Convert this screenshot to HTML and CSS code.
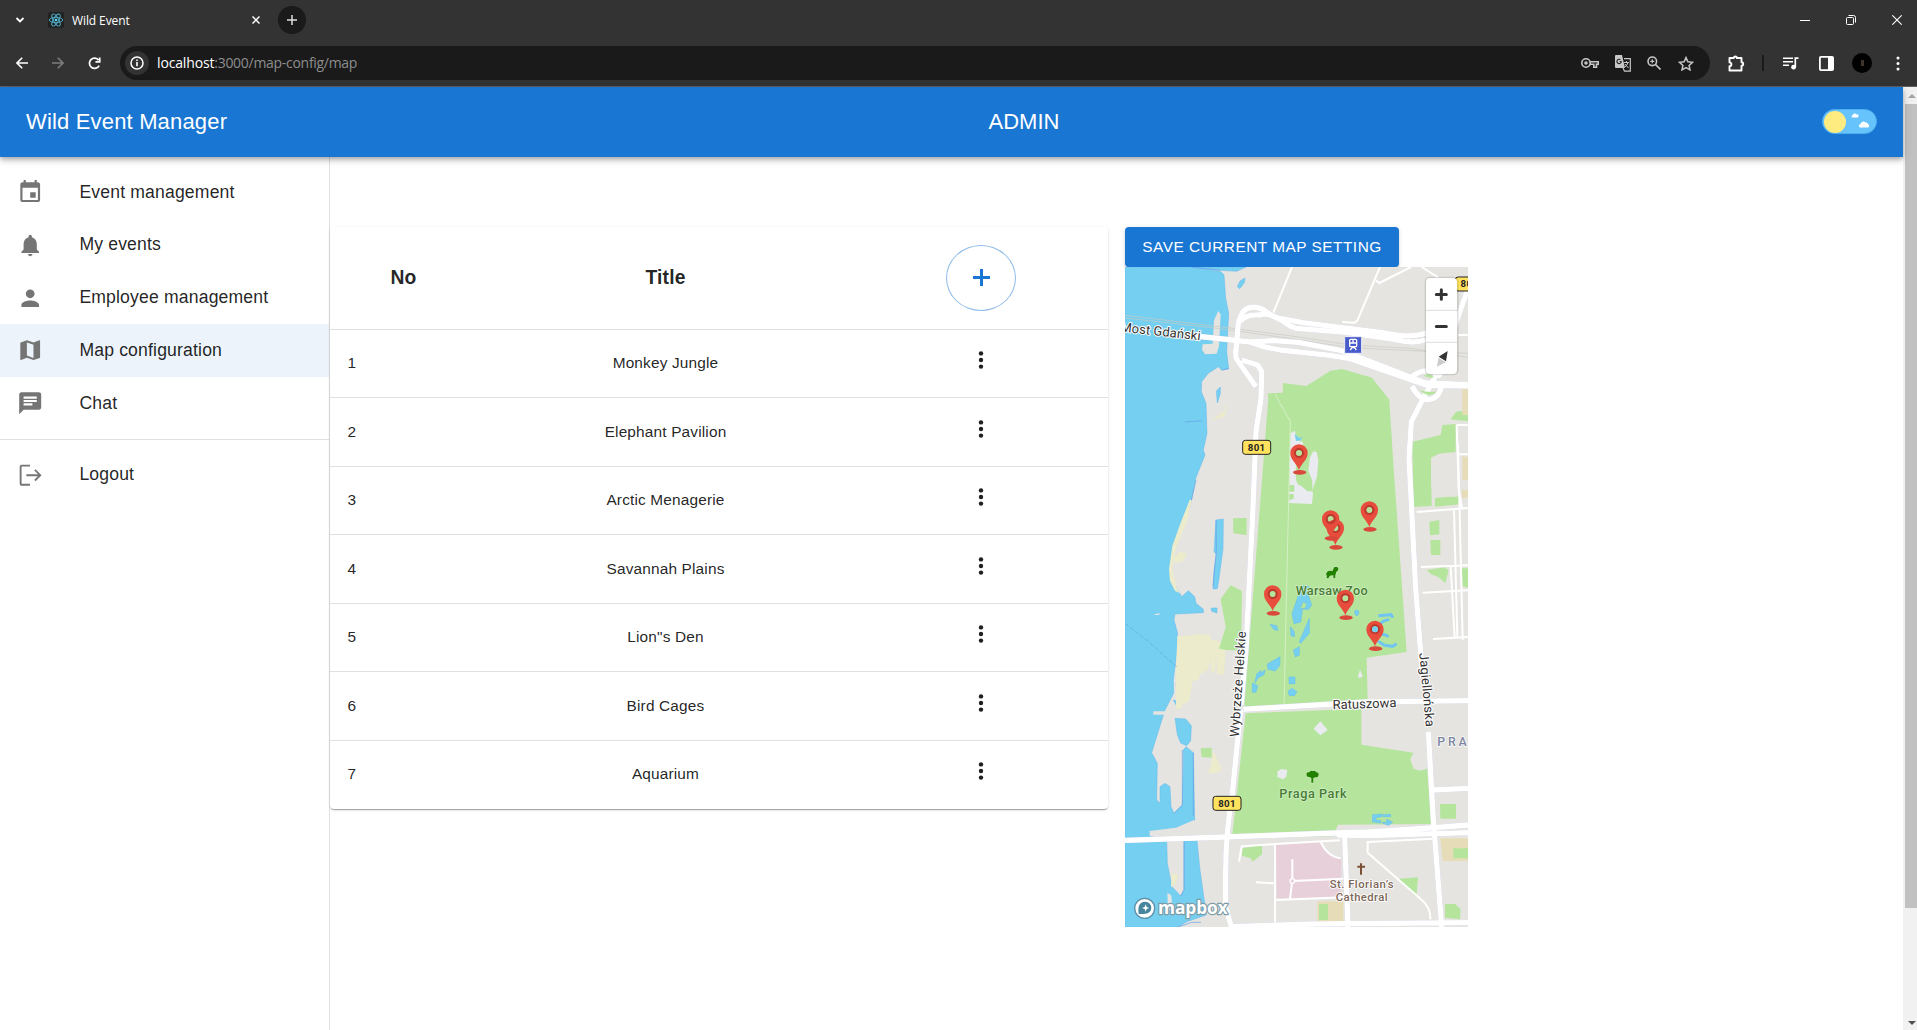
FILE: index.html
```html
<!DOCTYPE html>
<html lang="en">
<head>
<meta charset="utf-8">
<title>Wild Event</title>
<link rel="stylesheet" href="styles.css">
</head>
<body>
<div class="browser">
  <div class="tabstrip">
    <svg class="tab-chevron" width="10" height="8" viewBox="0 0 10 8"><path d="M1.5 2l3.5 3.5L8.500 2" fill="none" stroke="#fff" stroke-width="1.8"/></svg>
    <svg class="favicon" width="16" height="16" viewBox="0 0 16 16"><rect width="16" height="16" rx="2" fill="#222"/><g fill="none" stroke="#4fb3cf" stroke-width=".9"><ellipse cx="8" cy="8" rx="6.800" ry="2.600"/><ellipse cx="8" cy="8" rx="6.800" ry="2.600" transform="rotate(60 8 8)"/><ellipse cx="8" cy="8" rx="6.800" ry="2.600" transform="rotate(120 8 8)"/></g><circle cx="8" cy="8" r="1.300" fill="#61dafb"/></svg>
    <span class="tab-title">Wild Event</span>
    <svg class="tab-close" width="8" height="8" viewBox="0 0 8 8"><path d="M.5.5l7 7m0-7l-7 7" stroke="#fff" stroke-width="1.500"/></svg>
    <span class="new-tab"><svg width="10" height="10" viewBox="0 0 10 10"><path d="M5 0v10M0 5h10" stroke="#ddd" stroke-width="1.500"/></svg></span>
    <span class="window-controls">
      <svg width="10" height="10" viewBox="0 0 10 10"><path d="M0 5.500h10" stroke="#fff"/></svg>
      <svg width="10" height="10" viewBox="0 0 10 10" fill="none" stroke="#fff"><rect x=".5" y="2.500" width="7" height="7" rx="1"/><path d="M2.500.5h5a2 2 0 0 1 2 2v5"/></svg>
      <svg width="10" height="10" viewBox="0 0 10 10"><path d="M.3.3l9.400 9.400m0-9.400L.3 9.700" stroke="#fff" stroke-width="1.100"/></svg>
    </span>
  </div>
  <div class="toolbar">
    <div class="nav-icons">
      <svg width="12" height="12" viewBox="0 0 12 12" fill="none" stroke="#fff" stroke-width="1.600"><path d="M12 6H1M6.200.8L1 6l5.200 5.200"/></svg>
      <svg width="12" height="12" viewBox="0 0 12 12" fill="none" stroke="#7d7d7d" stroke-width="1.600"><path d="M0 6h11M5.800.8L11 6l-5.200 5.200"/></svg>
      <svg width="13" height="13" viewBox="0 0 14 14" fill="none" stroke="#fff" stroke-width="1.900"><path d="M12 9.200A5.500 5.500 0 1 1 11.500 3.500"/><path d="M12.600.5v4.700H8"/></svg>
    </div>
    <div class="address">
      <span class="site-info"><svg width="14" height="14" viewBox="0 0 14 14"><circle cx="7" cy="7" r="6" fill="none" stroke="#fff" stroke-width="1.500"/><path d="M7 6v4.200M7 3.500v1.600" stroke="#fff" stroke-width="1.600"/></svg></span>
      <span class="url"><b>localhost</b>:3000/map-config/map</span>
      <span class="address-icons">
        <svg width="18" height="12" viewBox="0 0 18 12" fill="none" stroke="#c7c7c7" stroke-width="1.600"><circle cx="5" cy="6" r="4.200"/><circle cx="5" cy="6" r="1"/><path d="M9 4.800h8.200v2.500h-1.700v3h-2.700v-3H9"/></svg>
        <svg width="16" height="17" viewBox="0 0 16 17"><path d="M1 0h6l3 13H1a1 1 0 0 1-1-1V1a1 1 0 0 1 1-1z" fill="#c7c7c7"/><path d="M9 3.700h6.300v12.500H9.500L8 13" fill="none" stroke="#c7c7c7" stroke-width="1.200"/><path d="M6.500 6.500H4.700M6.300 6.500a2.200 2.200 0 1 1-.8-1.800" stroke="#222" stroke-width="1.100" fill="none"/><path d="M9 7.500h5M11.500 6v1.500M13 7.500q-1 3-3 4.500m0-3l3.500 4" stroke="#c7c7c7" fill="none"/></svg>
        <svg width="14" height="14" viewBox="0 0 14 14" fill="none" stroke="#c7c7c7" stroke-width="1.600"><circle cx="5.300" cy="5.300" r="4.300"/><path d="M8.500 8.500l5 5"/><path d="M5.300 3.300v4M3.300 5.300h4" stroke-width="1.200"/></svg>
        <svg width="16" height="15" viewBox="0 0 16 15"><path d="M8 1.600l1.900 4.200 4.600.5-3.400 3.100.9 4.500-4-2.300-4 2.300.9-4.500L1.500 6.300l4.600-.5z" fill="none" stroke="#c7c7c7" stroke-width="1.500"/></svg>
      </span>
    </div>
    <div class="ext-icons">
      <svg class="ext" width="17" height="17" viewBox="0 0 17 17"><path d="M1.500 3h4.300a1.500 1.500 0 0 1 3 0h4.700v4.300a1.700 1.700 0 0 1 0 3.400v4.800h-12v-4.300a1.900 1.900 0 0 0 0-3.800z" fill="none" stroke="#fff" stroke-width="1.900" stroke-linejoin="round"/></svg>
      <i class="ext-divider"></i>
      <svg width="16" height="13" viewBox="0 0 16 13"><path d="M0 1.200h10M0 4.700h10M0 8.200h6" stroke="#fff" stroke-width="1.600"/><path d="M15.500 1.200H12.300V10" stroke="#fff" stroke-width="1.700" fill="none"/><circle cx="10.600" cy="10.200" r="2.400" fill="#fff"/></svg>
      <svg width="15" height="15" viewBox="0 0 15 15"><rect x=".9" y=".9" width="13.200" height="13.200" rx="1" fill="none" stroke="#fff" stroke-width="1.800"/><path d="M9 1h5v13H9z" fill="#fff"/></svg>
      <span class="profile"><i></i></span>
      <svg width="4" height="15" viewBox="0 0 4 15" fill="#fff"><circle cx="2" cy="2" r="1.500"/><circle cx="2" cy="7.500" r="1.500"/><circle cx="2" cy="13" r="1.500"/></svg>
    </div>
  </div>
</div>

<div class="viewport">
  <div class="app">
    <header class="appbar">
      <span class="brand">Wild Event Manager</span>
      <span class="role">ADMIN</span>
      <span class="theme-toggle"><i></i><svg width="21" height="17" viewBox="0 0 21 17" fill="#fff"><path d="M3.500 4.500a1.300 1.300 0 0 1 .3-2.500 2 2 0 0 1 3.600-.6 1.500 1.500 0 0 1 1.100 3.100zM11 14.500a1.900 1.900 0 0 1 .5-3.600 2.900 2.900 0 0 1 5-1.400 2.200 2.200 0 0 1 2.600 1.800 1.700 1.700 0 0 1-.1 3.200z"/></svg></span>
    </header>
    <div class="body">
      <nav class="drawer">
        <ul class="menu">
          <li><svg viewBox="0 0 24 24"><path d="M17 12h-5v5h5v-5zM16 1v2H8V1H6v2H5c-1.110 0-1.990.9-1.990 2L3 19c0 1.100.89 2 2 2h14c1.100 0 2-.9 2-2V5c0-1.100-.9-2-2-2h-1V1h-2zm3 18H5V8h14v11z"/></svg>Event management</li>
          <li><svg viewBox="0 0 24 24"><path d="M12 22c1.100 0 2-.9 2-2h-4c0 1.100.89 2 2 2zm6-6v-5c0-3.070-1.640-5.640-4.500-6.320V4c0-.83-.67-1.500-1.500-1.500s-1.500.67-1.500 1.500v.68C7.630 5.360 6 7.920 6 11v5l-2 2v1h16v-1l-2-2z"/></svg>My events</li>
          <li><svg viewBox="0 0 24 24"><path d="M12 12c2.210 0 4-1.790 4-4s-1.790-4-4-4-4 1.790-4 4 1.790 4 4 4zm0 2c-2.670 0-8 1.340-8 4v2h16v-2c0-2.660-5.330-4-8-4z"/></svg>Employee management</li>
          <li class="selected"><svg viewBox="0 0 24 24"><path d="M20.500 3l-.16.03L15 5.100 9 3 3.360 4.900c-.21.07-.36.25-.36.480V20.500c0 .28.22.5.5.5l.16-.03L9 18.900l6 2.100 5.640-1.900c.21-.07.36-.25.36-.48V3.500c0-.28-.22-.5-.5-.5zM15 19l-6-2.110V5l6 2.110V19z"/></svg>Map configuration</li>
          <li><svg viewBox="0 0 24 24"><path d="M20 2H4c-1.100 0-1.990.9-1.990 2L2 22l4-4h14c1.100 0 2-.9 2-2V4c0-1.100-.9-2-2-2zM6 9h12v2H6V9zm8 5H6v-2h8v2zm4-6H6V6h12v2z"/></svg>Chat</li>
        </ul>
        <ul class="menu">
          <li><svg viewBox="0 0 24 24" fill="none" stroke="#757575" stroke-width="1.700"><path class="outline" d="M11.800 3.300H4.200A.9.900 0 0 0 3.300 4.200v15.600a.9.900 0 0 0 .9.900h7.600M8.500 12H20.800M16.300 7.200l4.800 4.800-4.800 4.800"/></svg>Logout</li>
        </ul>
      </nav>
      <main class="content">
        <section class="table">
          <div class="row head"><span>No</span><span>Title</span><span><button class="add"><svg width="17" height="17" viewBox="0 0 17 17"><path d="M8.500 0v17M0 8.500h17" stroke="#1976d2" stroke-width="3"/></svg></button></span></div>
          <div class="row"><span>1</span><span>Monkey Jungle</span><span class="dots"><svg viewBox="0 0 4 18"><use href="#dots"/></svg></span></div>
          <div class="row"><span>2</span><span>Elephant Pavilion</span><span class="dots"><svg viewBox="0 0 4 18"><use href="#dots"/></svg></span></div>
          <div class="row"><span>3</span><span>Arctic Menagerie</span><span class="dots"><svg viewBox="0 0 4 18"><use href="#dots"/></svg></span></div>
          <div class="row"><span>4</span><span>Savannah Plains</span><span class="dots"><svg viewBox="0 0 4 18"><use href="#dots"/></svg></span></div>
          <div class="row"><span>5</span><span>Lion"s Den</span><span class="dots"><svg viewBox="0 0 4 18"><use href="#dots"/></svg></span></div>
          <div class="row"><span>6</span><span>Bird Cages</span><span class="dots"><svg viewBox="0 0 4 18"><use href="#dots"/></svg></span></div>
          <div class="row"><span>7</span><span>Aquarium</span><span class="dots"><svg viewBox="0 0 4 18"><use href="#dots"/></svg></span></div>
        </section>
        <section class="map-panel">
          <button class="save">SAVE CURRENT MAP SETTING</button>
          <svg class="map" width="343" height="660" viewBox="45 141 1029 1980">
            <defs>
              <g id="dots"><circle cx="2" cy="2.400" r="2.200"/><circle cx="2" cy="9" r="2.200"/><circle cx="2" cy="15.600" r="2.200"/></g>
              <g id="pin"><ellipse cx="2" cy="0" rx="20" ry="7" fill="#d9483b"/><path fill-rule="evenodd" d="M0-7C-7-28-26-36-26-58a26 26 0 0 1 52 0C26-36 7-28 0-7zM0-68a10 10 0 0 0 0 20 10 10 0 0 0 0-20z" fill="#e74c3c"/><circle cx="0" cy="-58" r="12" fill="none" stroke="#b93a2c" stroke-width="6"/></g>
              <g id="shield"><rect x="-42" y="-21" width="84" height="42" rx="8" fill="#ffe25e" stroke="#222" stroke-width="3"/><text y="10" class="shield-text">801</text></g>
            </defs>
            <rect x="45" y="141" width="1029" height="1980" fill="#e5e4e0"/>
            <!-- river -->
            <g class="water">
              <path d="M45 141H250L333 155L342 165L347 235L356 280L350 395L356 446L335 450L325 440L295 460L275 485L274 515L288 550L291 640L280 690L285 705L257 775L240 860L202 960L185 1010L180 1050L192 1090L215 1130L235 1112L254 1130L258 1150L280 1168V1178L195 1182L192 1200L203 1240L200 1300L190 1380L191 1420L165 1470L125 1598L142 1630L140 1740L150 1750V1700L165 1690L180 1700L183 1760L192 1780L217 1755L220 1640V1590L228 1580L250 1598L254 1800L195 1835L122 1833L118 1845L170 1855L172 1930L186 2000L212 2028L222 2010V1855L260 1850L270 1950L289 2085L230 2105L205 2121H45z"/>
              <path d="M245 141l85 10 50 3 28-13zM382 200l8-17 15-9-2 14-14 18zM319 513l12-12v20l-9 28zM318 900l22-3-1 90-13 95-4 24-13 1 3-55 8-50-8-6zM195 1495l32 2 17 20-2 45-12 15-18-8-10-25zM304 1164h17v15l-16-5zM190 1440l20 5 4 20-12-3zM200 1384l28 2v12h-30z"/>
            </g>
            <path class="shore" d="M245 141l85 10M258 780l-18 80-38 100M356 446l-21 4M318 900l1 90-10 110M222 1855v155l-10 18M250 1598v190M217 1590v165l-25 25M205 2121l40-14 28 0M225 606l50-4" />
            <!-- islands and sand -->
            <path class="land" d="M325 273l7 10-5 95-7 23-35 2-9-14 2-16 30-2 4-70zM130 1183l22-3-8 6zM130 1474h50v10h-50zM172 2018l12 8 4 50-14-8zM118 1833l80-10 54-23v15l-55 22-75 4zM118 1838l50 8v12l-48-10z"/>
            <g class="sand">
              <path d="M302 602l45-32v-15l6 2-10 33zM240 838l6 4-15 60-20 50-14 35-10 58 12 55 10 20-14-8-15-30-3-34 10-70 25-70zM190 1015l18-20 22 5-8 22-26 8z"/>
              <path d="M202 1248l45-2 13-4 40 2 4 18 12-2 14 4 17 20-2 40-4 42-20-5-2-52-5 50-10-2-2-40-8 32-25 15-2 15-20 5-10 60-22 10-8-50-10-30z"/>
              <path d="M198 1345l45 5v20l-15 8 2 35-14 5v48h-18zM302 1640l8-50 12 30 14 26-14 12-28 2zM185 1958l20 8-8 25-14 10z"/>
            </g>
            <!-- parks -->
            <g class="green">
              <path d="M473 520l45-2 1-29 70 9 72-46 35-5 90 26 52 66 12 192 40 565-120 17 3 131-370 15 72-925z"/>
              <path d="M407 1480l347-14V1574l156 24-9 20 10 30 40-8 14 172-281 2-15 35-303 4z"/>
              <path d="M369 895l41-1v50l-4 1-36-5zM332 1137l30-42 34 18-2 120 4 55-1 5-48-3-22-4 20-65z"/>
              <path d="M907 665l85-20 5-30 40-3v84l-50 5-24 12 2 145-54 3zM1022 598l16-23 36-4v33l-45-5zM975 832l75-3v24l-75 7zM958 905l30-5v43l-28 3zM961 960h30v45h-28zM950 1050l52-8 14 8-10 40-20-18-24-10zM1055 1045h19v58l-16-4zM272 1585l33-2v30l-30-2zM990 1752h48v44h-47zM398 1885l58-10v28l-28 22-6-10-26-8zM865 1976l59-4-5 60zM1005 2052h30l17 16-2 30-45-5z"/>
            </g>
            <!-- ponds -->
            <g class="water">
              <path d="M733 1175q5-10 14 0-1 14-10 11zM480 1213l20 4 4 14-12-2zM472 1332l38-22v25l-14 18-22-5zM440 1362l12-11-2 9 16-10-5 15-16 8-11 17zM427 1389l16 8-5 20h-11zM537 1371h18v20h-18zM534 1414l12-9 15 10-8 12h-15z"/>
              <path fill-rule="evenodd" d="M571 1099l22-2 10 10-8 18 10 30-10 14-17-3-6 40-20 5-6-30 16-46zM578 1147l-8 20 15-2 6-15zM568 1265l30-70v45l-26 30zM541 1220l12 15v15l-10-3zM550 1290l18-10v25l-12 6z"/>
              <path d="M788 1784l28-2v8l-18 3v8h14v8l-25-3zM818 1784l24-1v7h-22zM818 1806l12 2v-10l18 8-12 10-18-6z"/>
            </g>
            <path class="pond-line" d="M805 1187l38-3 6 9M838 1198l-18 5-14 14 5 12-7 12 20 3 12 6M804 1264l20 12 24 3 12-8"/>
            <path class="beige" d="M1057 710h17v70h-17zM1056 810h18v23h-18zM1057 490h17v95h-17zM991 1855h83v68h-76zM622 2044h78v63h-78z"/>
            <path class="green" d="M1030 1885h44v30h-44zM627 2052h27v48h-27z"/>
            <path class="pink" d="M498 1874l130-9q20 45 66 49v70l-1 50-193 1z"/>
            <path class="pale" d="M541 640l14-8 4 28 20 6v18l-20 5-2 75q0 30 14 32l22 18h14v-32l-12-30 5-40 10-18 10 2 5 24-4 50-12 34-2 9 2 8-3 31-69-3v-8l14-5v-14h-14v-7h16v-20h-15zM611 1526l20-22 22 26-22 16zM503 1654l12-7 17 3-3 20-10 8-17-7zM745 1366l5-17 8 18-2 5-12 1z"/>
            <path d="M554 642l14 12 9-3-5 10-14 2z" fill="#75cff0"/>
            <path class="land" d="M963 735l35-5 3-28 25-3 18 10v120l-74 5-7-45zM902 1620l20-24 28 4 2 45q-25 14-40-2z"/>
            <path d="M496 522l12 25 33 57-1 70-6 250-12 530" fill="none" stroke="#d6efc6" stroke-width="3"/>
            <path d="M45 1210l70 55 85 75" fill="none" stroke="#58aee0" stroke-width="2" stroke-dasharray="14 5"/>
            <!-- railway -->
            <path class="rail" d="M45 286L330 320 560 350 720 375 900 385 1074 412M45 294L330 326 560 358 720 383 1074 400"/>
            <!-- streets -->
            <g class="street">
              <path d="M546 141L490 278M810 141L742 302l-8 6-38-2M798 182l10 7 95-48M935 141l50 32M1044 345h30M1040 615h34M1040 615l6 190 10 60M920 876l154-12M1032 868l10 382M933 1041l141-5M938 1118l136-7M1022 1040l12 212M1044 670l14 590M969 1257l105-6M1045 703h29" />
              <path d="M387 1925l8-46 100-7 195-11M495 1872v250M438 1987l57 3M547 1918v65l-7 53M547 1983l153-7M498 2040l205-8M632 1865q20 45 60 50M773 1898v-32l200-10M773 1898l160 140q30 25 28 60"/>
            </g>
            <!-- main roads -->
            <g class="road">
              <path d="M240 346l180 20 70-4 75 5 130 25 80 30 170 66 129 6"/>
              <path d="M420 366l40 14 50 10 150 16 60 10 230 80 124 2"/>
              <path d="M377 400l8-90q10-45 38-48 28-2 45 13l30 18 80 15 240 30q80 18 130 2l30-10"/>
              <path d="M390 305q15-22 60-20 30-12 88 32l20 8 150 12 150 22q50 14 90 0"/>
              <path d="M377 390l1 25 60 85M395 420l48 15 12 20-2 80-15 100-10 250-20 400-15 170"/>
              <path d="M1074 205l-38 110-30 100-66 120-36 70-7 110 20 390 20 260"/>
              <path d="M906 498q20 42 52 40 28-2 36-38M906 470q45-36 88 0"/>
              <path d="M400 1468l370-22 304-4"/>
              <path d="M392 1470l-25 250q-20 120-20 240v100l18 65"/>
              <path d="M45 1861l300-10 330-12 100-3 185-12 114-9M680 1845l100 2 294-9"/>
              <path d="M955 1535l14 250 26 336M704 1850l10 271M970 1710l104-5M362 2120l250-8 462-4"/>
            </g>
            <path class="green" d="M930 511q30 8 50 3-24 24-50-3zM940 468q18-12 32 3l-8 3z"/>
            <circle cx="547" cy="1983" r="7" fill="#e8d0da" stroke="#fff" stroke-width="4"/>
            <!-- labels -->
            <g class="road-label">
              <text transform="translate(30 334) rotate(6.500)" textLength="242">Most Gdański</text>
              <text transform="translate(386 1552) rotate(-86)" textLength="318">Wybrzeże Helskie</text>
              <text transform="translate(928 1300) rotate(85)" textLength="222">Jagiellońska</text>
              <text transform="translate(668 1468) rotate(-2)" textLength="192">Ratuszowa</text>
            </g>
            <text class="district" x="982" y="1578" textLength="88">PRA</text>
            <text class="park-label" x="557" y="1125" textLength="216">Warsaw Zoo</text>
            <text class="park-label" x="508" y="1734" textLength="202">Praga Park</text>
            <text class="church" x="659" y="2004" textLength="192">St. Florian’s</text>
            <text class="church" x="677" y="2043" textLength="156">Cathedral</text>
            <path d="M753 1930v34M742 1940h23" stroke="#7a5137" stroke-width="6"/>
            <path class="poi" d="M648 1066q0-12 10-14h10l4-10 8-2 5 4v6l-6 6-3 10v9h-6v-9l-10 1-5 8h-6l2-10-2 1-3 6z"/>
            <path class="poi" d="M604 1688v-14l-7-3q-10 0-7-11 0-5 8-3 1-6 10-4 9-3 11 4 8 0 7 8 0 9-11 7l-5 3v13z"/>
            <rect x="704" y="350" width="51" height="50" rx="2" fill="#475bc9" stroke="#eef" stroke-width="3"/>
            <g fill="none" stroke="#fff" stroke-width="4"><rect x="719" y="358" width="21" height="22" rx="3"/><path d="M729 358v12M719 369h21M721 390l5-7h8l5 7"/></g>
            <use href="#shield" x="440" y="682"/><use href="#shield" x="351" y="1750"/><use href="#shield" x="1078" y="192"/>
            <use href="#pin" x="567" y="757"/><use href="#pin" x="778" y="928"/><use href="#pin" x="676" y="982"/><use href="#pin" x="662" y="955"/><use href="#pin" x="488" y="1180"/><use href="#pin" x="706" y="1193"/><use href="#pin" x="795" y="1286"/>
            <circle cx="795" cy="1228" r="9" fill="#75cff0"/>
            <!-- zoom and compass controls -->
            <rect x="944" y="170" width="102" height="296" rx="16" fill="#000" opacity=".12"/>
            <rect x="948" y="174" width="93" height="288" rx="12" fill="#fff"/>
            <path d="M948 271h93M948 367h93" stroke="#ddd" stroke-width="3"/>
            <path d="M994 209v29M979 223.500h30M979 319.500h30" stroke="#333" stroke-width="9" stroke-linecap="round"/>
            <path d="M1013 393l-27 17 22 14z" fill="#333"/><path d="M981 440l4-27 22 14z" fill="#ccc"/>
            <!-- attribution logo -->
            <circle cx="104" cy="2065" r="30" fill="#fff" stroke="#5d8fa6" stroke-width="4"/>
            <path d="M86 2082q-5-37 20-37a18 18 0 0 1 0 36q-10 2-20 1z" fill="#47859c"/>
            <path d="M107 2053l3 8 8 3-8 3-3 8-3-8-8-3 8-3z" fill="#fff"/>
            <text class="logo" x="144" y="2081" textLength="209">mapbox</text>
          </svg>
        </section>
      </main>
    </div>
  </div>
  <div class="scrollbar"><i class="up"></i><i class="thumb"></i><i class="down"></i></div>
</div>
</body>
</html>
```
FILE: styles.css
```css
* { box-sizing: border-box; }
body { margin: 0; width: 1917px; height: 1030px; overflow: hidden; background: #fff; font-family: "Liberation Sans", Arial, sans-serif; color: rgba(0,0,0,.87); display: flex; flex-direction: column; }
svg { display: block; flex: none; }
button { font: inherit; border: 0; padding: 0; }
ul { list-style: none; margin: 0; padding: 0; }

.browser { height: 87px; flex: none; background: #333; border-bottom: 1px solid #606060; }
.tabstrip { height: 46px; display: flex; align-items: center; padding: 0 15px 6px 15px; font: 12px "Open Sans", sans-serif; color: #fff; }
.favicon { margin-left: 23px; }
.tab-title { margin-left: 8px; width: 180px; letter-spacing: -.1px; }
.new-tab { margin-left: 18px; width: 28px; height: 28px; border-radius: 50%; background: #1a1a1a; display: grid; place-items: center; }
.window-controls { margin-left: auto; display: flex; gap: 36px; }
.toolbar { height: 34px; display: flex; align-items: center; }
.nav-icons { width: 120px; padding-left: 16px; display: flex; align-items: center; gap: 24px; }
.address { width: 1590px; height: 34px; border-radius: 17px; background: #1a1a1a; display: flex; align-items: center; padding: 0 16px 0 5px; }
.site-info { width: 24px; height: 24px; border-radius: 50%; background: #333; display: grid; place-items: center; }
.url { margin-left: 8px; padding-bottom: 1px; font: 14px "Open Sans", sans-serif; letter-spacing: -.29px; color: #8d8d8d; }
.url b { font-weight: 400; color: #fff; letter-spacing: -.15px; }
.address-icons { margin-left: auto; display: flex; align-items: center; gap: 16px; }
.address-icons svg:nth-child(-n+3) { position: relative; left: -1px; }
.ext-icons { flex: 1; display: flex; align-items: center; padding-left: 18px; }
.ext-divider { width: 2px; height: 16px; background: #1a1a1a; margin: 0 19px 0 17px; }
.ext-icons svg + svg { margin-left: 20px; }
.profile { width: 20px; height: 20px; border-radius: 50%; background: #000; margin: 0 24px 0 18px; display: grid; place-items: center; }
.profile i { width: 3px; height: 6px; background: #3d342c; }

.viewport { flex: 1; display: flex; min-height: 0; }
.app { width: 1903px; display: flex; flex-direction: column; }
.appbar { height: 70px; flex: none; position: relative; background: #1976d2; color: #fff; display: grid; grid-template-columns: 1fr 80px 1fr; align-items: center; padding: 0 26px; font-size: 22px; letter-spacing: .17px; box-shadow: 0 2px 4px -1px rgba(0,0,0,.2), 0 4px 5px rgba(0,0,0,.14), 0 1px 11px rgba(0,0,0,.12); }
.role { text-align: center; width: 225px; letter-spacing: 0; }
.theme-toggle { justify-self: end; width: 55px; height: 25px; border-radius: 13px; background: #66c3fb; border: 1px solid #4eb1ef; display: flex; align-items: center; margin-bottom: 1px; }
.theme-toggle i { width: 22px; height: 22px; margin: 0 3px 0 1px; border-radius: 50%; background: #ffec80; }

.body { flex: 1; display: flex; min-height: 0; }
.drawer { width: 330px; border-right: 1px solid #e0e0e0; }
.menu { padding: 8.800px 0; }
.menu + .menu { border-top: 1px solid #e0e0e0; }
.menu li { height: 52.800px; display: flex; align-items: center; gap: 35.600px; padding-left: 17.400px; font-size: 17.600px; letter-spacing: .165px; }
.menu li.selected { background: #ecf3fb; }
.menu svg { width: 26.400px; height: 26.400px; fill: #757575; }
.menu svg .outline { fill: none; }

.content { flex: 1; display: flex; align-items: flex-start; gap: 17px; padding-top: 70px; }
.table { width: 778px; border-radius: 4px; box-shadow: 0 2px 1px -1px rgba(0,0,0,.2), 0 1px 1px rgba(0,0,0,.14), 0 1px 3px rgba(0,0,0,.12); }
.row { height: 68.500px; display: grid; grid-template-columns: 147px 377px 254px; align-items: center; border-bottom: 1px solid #e0e0e0; font-size: 15.400px; letter-spacing: .165px; text-align: center; }
.row > :first-child { text-align: left; padding-left: 17.600px; }
.row:last-child { border-bottom-color: transparent; }
.row.head { height: 102.500px; font-size: 19.300px; font-weight: 700; }
.row.head > :first-child { text-align: center; padding: 0; }
.row.head > :last-child, .dots { display: grid; place-items: center; }
.add { width: 70px; height: 66px; border-radius: 50%; border: 1px solid #8cbae8; background: #fff; display: grid; place-items: center; }
.dots svg { width: 4px; height: 18px; margin-bottom: 6px; overflow: visible; fill: #1f1f1f; }
.save { display: block; width: 274px; height: 40px; padding-bottom: 1px; border-radius: 4px; background: #1976d2; color: #fff; font-size: 15.400px; letter-spacing: .5px; white-space: nowrap; box-shadow: 0 3px 1px -2px rgba(0,0,0,.2), 0 2px 2px rgba(0,0,0,.14), 0 1px 5px rgba(0,0,0,.12); }

.map { position: relative; overflow: hidden; }
.map text { font-family: Roboto, sans-serif; font-weight: 500; paint-order: stroke; stroke-linejoin: round; }
.water { fill: #75cff0; stroke: #65b8ee; stroke-width: 1.500; }
.shore { fill: none; stroke: #639fea; stroke-width: 2; }
.pond-line { fill: none; stroke: #6fc4f0; stroke-width: 9; }
.land { fill: #e5e4e0; }
.sand { fill: #ecebcb; }
.green { fill: #b5e59d; }
.beige { fill: #e6ddb8; }
.pink { fill: #e8d0da; }
.pale { fill: #e9ebf0; }
.rail { fill: none; stroke: #c9cac4; stroke-width: 2; }
.street { fill: none; stroke: #fff; stroke-width: 6; }
.road path { fill: none; }
.road { stroke: #fff; stroke-width: 16; stroke-linejoin: round; filter: drop-shadow(0 0 2px #bfc4e2); }
.road-label text { font-size: 39px; font-weight: 400; fill: #333; stroke: #fff; stroke-width: 6px; }
.district { font-size: 37px; fill: #7d84a0; stroke: #fff; stroke-width: 4px; }
.park-label { font-size: 38px; fill: #477c35; stroke: #d7f0ca; stroke-width: 4px; }
.church { font-size: 34px; fill: #7c6657; stroke: #fff; stroke-width: 5px; }
.poi { fill: #238100; stroke: #e1f5d6; stroke-width: 3; paint-order: stroke; }
.map .shield-text { font-size: 29px; font-weight: 700; fill: #222; text-anchor: middle; letter-spacing: 1px; }
.map .logo { font-family: "Open Sans", sans-serif; font-size: 52px; font-weight: 700; fill: #fff; stroke: #7d9ba6; stroke-width: 7px; }

.scrollbar { width: 14px; background: #f1f1f1; display: flex; flex-direction: column; align-items: flex-end; padding: 7px 0 5px; }
.scrollbar .up, .scrollbar .down { border: 4px solid transparent; border-top: 0; border-bottom: 4px solid #a3a3a3; margin-right: 1px; }
.scrollbar .thumb { width: 12px; height: 804px; margin-top: 6px; background: #c1c1c1; }
.scrollbar .down { margin-top: auto; border-bottom: 0; border-top: 4px solid #505050; }
```
